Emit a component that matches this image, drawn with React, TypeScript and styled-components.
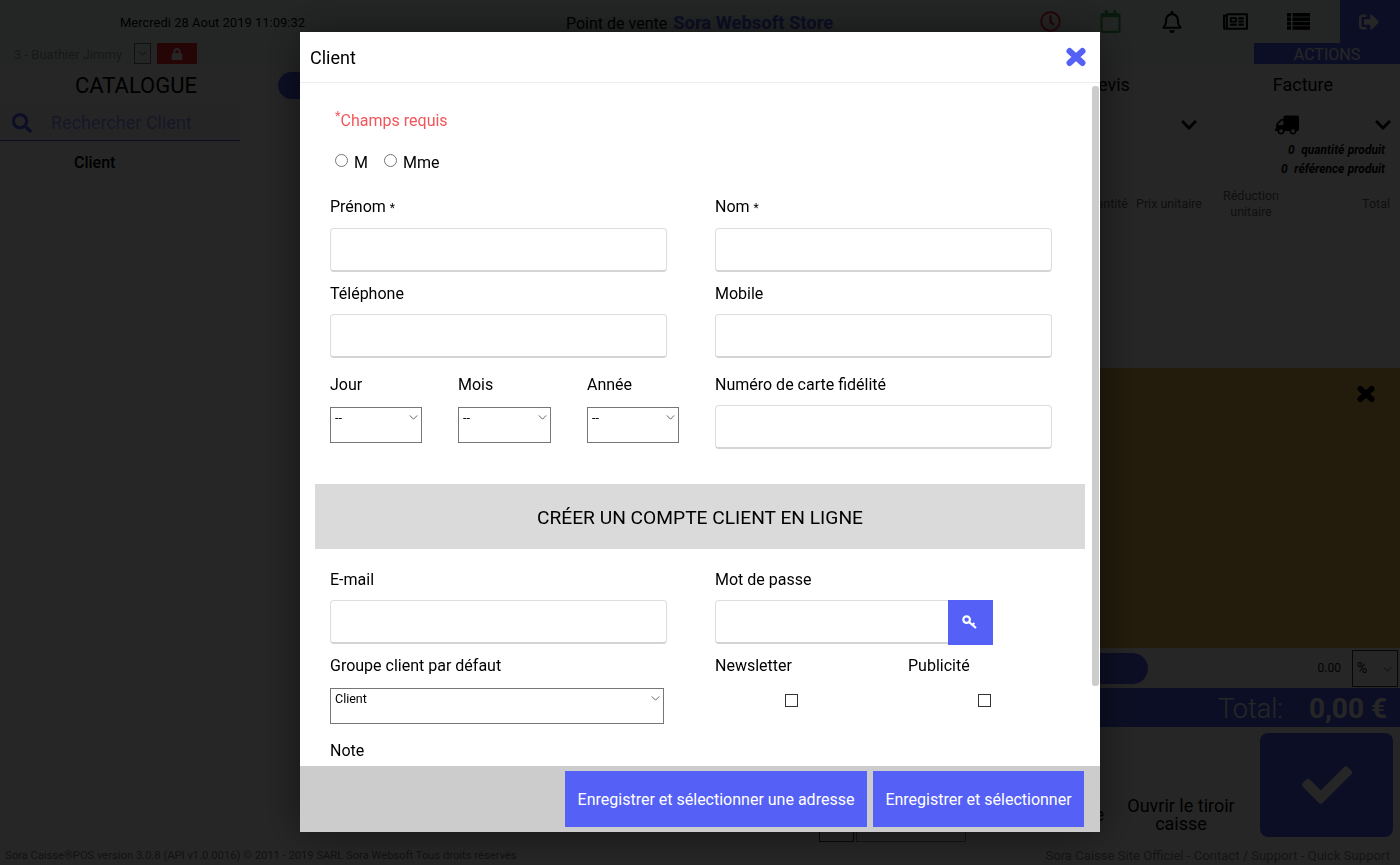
import React from "react";
import styled, { createGlobalStyle } from "styled-components";
import {
  FaCheck,
  FaChevronDown,
  FaLock,
  FaRegBell,
  FaRegCalendar,
  FaRegClock,
  FaRegNewspaper,
  FaSearch,
  FaSignOutAlt,
  FaTruck,
} from "react-icons/fa";

const ACCENT = "#5561f6";

const Global = createGlobalStyle`
  html, body {
    margin: 0;
    height: 100%;
    overflow: hidden;
    font-family: Roboto, "Liberation Sans", sans-serif;
    color: #000;
    background: #fff;
  }
  * { box-sizing: border-box; }
`;

const ChevronSvg = styled.svg`
  position: absolute;
  top: 8px;
  right: 4px;
`;

const Chevron: React.FC = () => (
  <ChevronSvg viewBox="0 0 10 6" width="9" height="5">
    <path d="M0.5 0.5 L5 5 L9.5 0.5" fill="none" stroke="#444" strokeWidth="1" />
  </ChevronSvg>
);

const CloseMark: React.FC<{ size: number }> = ({ size }) => (
  <svg viewBox="0 0 19 18" width={size} height={size}>
    <path d="M3.5 3.5 L15.5 14.5 M15.5 3.5 L3.5 14.5" fill="none" stroke="currentColor" strokeWidth="6" strokeLinecap="round" />
  </svg>
);

const ListMark: React.FC = () => (
  <svg viewBox="0 0 23 17" width="23" height="17" fill="currentColor">
    {[0, 4.4, 8.8, 13.2].map((y) => (
      <g key={y}>
        <rect x="0" y={y} width="4" height="3.6" />
        <rect x="5.5" y={y} width="17.5" height="3.6" />
      </g>
    ))}
  </svg>
);

const KeyMark: React.FC = () => (
  <svg viewBox="0 0 15 14" width="15" height="14" fill="none" stroke="currentColor">
    <circle cx="4.6" cy="4.6" r="3.3" strokeWidth="2.2" />
    <path d="M7 7 L14 13" strokeWidth="2.2" />
    <path d="M10.4 10 L12.4 8" strokeWidth="1.8" />
  </svg>
);

const Select: React.FC<{ value: string; width: number }> = ({ value, width }) => (
  <SelectWrap $width={width}>
    <SelectBox defaultValue={value}>
      <option>{value}</option>
    </SelectBox>
    <Chevron />
  </SelectWrap>
);

export default function App() {
  return (
    <>
      <Global />
      <Page>
        <Header>
          <DateText>Mercredi 28 Aout 2019 11:09:32</DateText>
          <StoreTitle>
            Point de vente <StoreName>Sora Websoft Store</StoreName>
          </StoreTitle>
          <HeaderIcons>
            <HeaderIcon $width={60} $color="#ff2a3a"><FaRegClock size={21} /></HeaderIcon>
            <HeaderIcon $width={60} $color="#3fae5a"><FaRegCalendar size={23} /></HeaderIcon>
            <HeaderIcon $width={63}><FaRegBell size={22} /></HeaderIcon>
            <HeaderIcon $width={64}><FaRegNewspaper size={25} /></HeaderIcon>
            <HeaderIcon $width={63}><ListMark /></HeaderIcon>
            <ExitButton><FaSignOutAlt size={20} /></ExitButton>
          </HeaderIcons>
        </Header>

        <SubBar>
          <UserName>3 - Buathier Jimmy</UserName>
          <SmallSelect><Chevron /></SmallSelect>
          <LockButton><FaLock size={12} /></LockButton>
          <ActionsTag>ACTIONS</ActionsTag>
        </SubBar>

        <TabsRow>
          <TabTitle $width={272}>CATALOGUE</TabTitle>
          <Pill />
          <QuoteTab>Devis</QuoteTab>
          <InvoiceTab>Facture</InvoiceTab>
        </TabsRow>

        <Main>
          <LeftColumn>
            <SearchRow>
              <FaSearch size={20} />
              <SearchText>Rechercher Client</SearchText>
            </SearchRow>
            <ClientHead>Client</ClientHead>
          </LeftColumn>

          <CenterColumn>
            <Pager>
              <PagerCell $width={35} $color="#333" />
              <PagerCell $width={110} $color="#888" />
            </Pager>
          </CenterColumn>

          <RightColumn>
            <ShipRow>
              <ShipChevron $left={100}><FaChevronDown size={18} /></ShipChevron>
              <TruckIcon><FaTruck size={24} /></TruckIcon>
              <ShipChevron $left={75}><FaChevronDown size={18} /></ShipChevron>
            </ShipRow>
            <Counts>
              <div>0 &nbsp;quantité produit</div>
              <div>0 &nbsp;référence produit</div>
            </Counts>
            <TableHead>
              <HeadCell $width={48} $align="right">Quantité</HeadCell>
              <HeadCell $width={82}>Prix unitaire</HeadCell>
              <HeadCell $width={82}>Réduction unitaire</HeadCell>
              <HeadCell $width={98} $align="right">Total</HeadCell>
            </TableHead>
            <Notice>
              <CloseMark size={18} />
            </Notice>
            <DiscountRow>
              <DiscountPill />
              <DiscountValue>0.00</DiscountValue>
              <PercentSelect>
                %
                <Chevron />
              </PercentSelect>
            </DiscountRow>
            <TotalBar>
              <span>Total:</span>
              <TotalValue>0,00 €</TotalValue>
            </TotalBar>
            <ActionRow>
              <ActionLabel>Vide</ActionLabel>
              <DrawerLabel>Ouvrir le tiroir caisse</DrawerLabel>
              <ConfirmButton><FaCheck size={50} /></ConfirmButton>
            </ActionRow>
          </RightColumn>
        </Main>

        <Footer>
          <span>Sora Caisse®POS version 3.0.8 (API v1.0.0016) © 2011 - 2019 SARL Sora Websoft Tous droits réservés</span>
          <FooterLinks>Sora Caisse Site Officiel - Contact / Support - Quick Support</FooterLinks>
        </Footer>
      </Page>

      <Overlay>
        <Modal>
          <ModalHeader>
            <ModalTitle>Client</ModalTitle>
            <CloseIcon><CloseMark size={20} /></CloseIcon>
          </ModalHeader>

          <ModalBody>
            <RequiredNote><sup>*</sup>Champs requis</RequiredNote>
            <RadioRow>
              <RadioLabel><Radio type="radio" name="civ" />M</RadioLabel>
              <RadioLabel><Radio type="radio" name="civ" />Mme</RadioLabel>
            </RadioRow>

            <TwoColumns $top={23} $gap={11}>
              <Field>
                <Label>Prénom <Star>*</Star></Label>
                <TextInput />
              </Field>
              <Field>
                <Label>Nom <Star>*</Star></Label>
                <TextInput />
              </Field>
              <Field>
                <Label>Téléphone</Label>
                <TextInput />
              </Field>
              <Field>
                <Label>Mobile</Label>
                <TextInput />
              </Field>
            </TwoColumns>

            <DateRow>
              <DateFields>
                <div>
                  <Label>Jour</Label>
                  <SelectSlot><Select value="--" width={92} /></SelectSlot>
                </div>
                <div>
                  <Label>Mois</Label>
                  <SelectSlot><Select value="--" width={93} /></SelectSlot>
                </div>
                <div>
                  <Label>Année</Label>
                  <SelectSlot><Select value="--" width={92} /></SelectSlot>
                </div>
              </DateFields>
              <Field>
                <Label>Numéro de carte fidélité</Label>
                <TextInput />
              </Field>
            </DateRow>

            <Banner>CRÉER UN COMPTE CLIENT EN LIGNE</Banner>

            <TwoColumns $top={20} $gap={10}>
              <Field>
                <Label>E-mail</Label>
                <TextInput />
              </Field>
              <Field>
                <Label>Mot de passe</Label>
                <PasswordGroup>
                  <PasswordInput />
                  <KeyButton><KeyMark /></KeyButton>
                </PasswordGroup>
              </Field>
              <Field>
                <Label>Groupe client par défaut</Label>
                <SelectSlot><Select value="Client" width={334} /></SelectSlot>
              </Field>
              <OptIns>
                <div>
                  <Label>Newsletter</Label>
                  <CheckBox type="checkbox" />
                </div>
                <div>
                  <Label>Publicité</Label>
                  <CheckBox type="checkbox" />
                </div>
              </OptIns>
            </TwoColumns>

            <NoteLabel>Note</NoteLabel>
            <ScrollThumb />
          </ModalBody>

          <ModalFooter>
            <SaveButton $width={302}>Enregistrer et sélectionner une adresse</SaveButton>
            <SaveButton $width={211}>Enregistrer et sélectionner</SaveButton>
          </ModalFooter>
        </Modal>
      </Overlay>
    </>
  );
}

/* page behind the dialog */

const Page = styled.div`
  width: 1400px;
  height: 865px;
  display: flex;
  flex-direction: column;
  overflow: hidden;
  background: #fff;
`;

const Header = styled.div`
  height: 43px;
  flex: none;
  display: flex;
  align-items: center;
  background: #f2fffb;
`;

const DateText = styled.div`
  width: 420px;
  padding-left: 120px;
  font-size: 13px;
  padding-top: 2px;
`;

const StoreTitle = styled.div`
  margin-left: 146px;
  font-size: 16px;
  padding-top: 2px;
`;

const StoreName = styled.span`
  margin-left: 2px;
  font-size: 18.4px;
  font-weight: 700;
  color: ${ACCENT};
`;

const HeaderIcons = styled.div`
  margin-left: auto;
  display: flex;
  align-items: center;
  height: 100%;
`;

const HeaderIcon = styled.div<{ $width: number; $color?: string }>`
  width: ${(p) => p.$width}px;
  display: flex;
  justify-content: center;
  color: ${(p) => p.$color || "#000"};
`;

const ExitButton = styled.div`
  width: 60px;
  height: 100%;
  margin-left: 10px;
  padding-right: 2px;
  display: flex;
  align-items: center;
  justify-content: center;
  background: ${ACCENT};
  color: #fff;
`;

const SubBar = styled.div`
  height: 22px;
  flex: none;
  display: flex;
  align-items: flex-start;
  padding-left: 14px;
  background: #f2fffb;
`;

const UserName = styled.div`
  width: 120px;
  font-size: 13px;
  line-height: 24px;
  color: #999;
  white-space: nowrap;
`;

const SmallSelect = styled.div`
  position: relative;
  width: 17px;
  height: 21px;
  border: 1px solid #767676;
  ${ChevronSvg} {
    top: 7px;
    right: 3px;
  }
`;

const LockButton = styled.div`
  width: 40px;
  height: 21px;
  margin-left: 6px;
  display: flex;
  align-items: center;
  justify-content: center;
  background: #ff2434;
  color: #fff;
`;

const ActionsTag = styled.div`
  width: 146px;
  height: 21px;
  margin-left: auto;
  background: ${ACCENT};
  color: #fff;
  font-size: 16px;
  line-height: 24px;
  text-align: center;
`;

const TabsRow = styled.div`
  height: 40px;
  flex: none;
  display: flex;
  align-items: center;
  background: #fbfbfb;
`;

const TabTitle = styled.div<{ $width: number }>`
  width: ${(p) => p.$width}px;
  text-align: center;
  font-size: 22px;
`;

const Pill = styled.div`
  width: 160px;
  height: 27px;
  margin-left: 6px;
  border-radius: 14px;
  background: ${ACCENT};
`;

const QuoteTab = styled.div`
  margin: 0 143px 2px auto;
  font-size: 18px;
`;

const InvoiceTab = styled.div`
  margin: 0 67px 2px 0;
  font-size: 18px;
`;

const Main = styled.div`
  flex: 1;
  min-height: 0;
  display: grid;
  grid-template-columns: 240px 840px 320px;
`;

const LeftColumn = styled.div`
  display: flex;
  flex-direction: column;
`;

const SearchRow = styled.div`
  height: 36px;
  display: flex;
  align-items: center;
  padding-left: 12px;
  border-bottom: 1px solid ${ACCENT};
  background: #f4f9ff;
  color: ${ACCENT};
`;

const SearchText = styled.div`
  margin-left: 19px;
  font-size: 18px;
  opacity: 0.6;
`;

const ClientHead = styled.div`
  padding-left: 74px;
  font-size: 16px;
  font-weight: 500;
  line-height: 43px;
`;

const CenterColumn = styled.div`
  display: flex;
  flex-direction: column;
  justify-content: flex-end;
  padding: 0 0 3px 579px;
`;

const Pager = styled.div`
  display: flex;
  gap: 2px;
`;

const PagerCell = styled.div<{ $width: number; $color: string }>`
  width: ${(p) => p.$width}px;
  height: 10px;
  border: 1px solid ${(p) => p.$color};
  border-top: 0;
`;

const RightColumn = styled.div`
  display: flex;
  flex-direction: column;
`;

const ShipRow = styled.div`
  height: 36px;
  display: flex;
  align-items: center;
  padding-top: 3px;
`;

const ShipChevron = styled.div<{ $left: number }>`
  margin-left: ${(p) => p.$left}px;
  display: flex;
`;

const TruckIcon = styled.div`
  margin-left: 77px;
  display: flex;
  transform: scaleX(-1);
`;

const Counts = styled.div`
  padding-right: 15px;
  text-align: right;
  font-size: 12px;
  font-style: italic;
  font-weight: 700;
  line-height: 19px;
  word-spacing: 0.4px;
`;

const TableHead = styled.div`
  display: flex;
  align-items: center;
  height: 46px;
  margin-top: 2px;
  color: #666;
  font-size: 12.5px;
`;

const HeadCell = styled.div<{ $width: number; $align?: string }>`
  width: ${(p) => p.$width}px;
  text-align: ${(p) => p.$align || "center"};
  line-height: 16px;
`;

const Notice = styled.div`
  height: 280px;
  margin-top: 141px;
  display: flex;
  justify-content: flex-end;
  padding: 17px 25px 0 0;
  background: #e9b551;
`;

const DiscountRow = styled.div`
  height: 40px;
  display: flex;
  align-items: center;
`;

const DiscountPill = styled.div`
  width: 68px;
  height: 31px;
  border-radius: 0 16px 16px 0;
  background: ${ACCENT};
`;

const DiscountValue = styled.div`
  margin-left: auto;
  font-size: 12px;
  color: #111;
`;

const PercentSelect = styled.div`
  position: relative;
  width: 46px;
  height: 37px;
  margin: 0 2px 0 11px;
  padding-left: 4px;
  border: 1px solid #333;
  font-size: 14px;
  line-height: 35px;
  ${ChevronSvg} {
    top: 16px;
    right: 5px;
  }
`;

const TotalBar = styled.div`
  height: 39px;
  display: flex;
  align-items: center;
  justify-content: flex-end;
  padding: 2px 13px 0 0;
  background: ${ACCENT};
  color: #fff;
  font-size: 27px;
  font-weight: 300;
`;

const TotalValue = styled.span`
  margin-left: 26px;
  font-size: 28px;
  font-weight: 700;
`;

const ActionRow = styled.div`
  flex: 1;
  display: flex;
  align-items: flex-start;
  padding-top: 6px;
`;

const ActionLabel = styled.div`
  width: 100px;
  margin: 73px 0 0 -40px;
  padding-right: 36px;
  text-align: right;
  font-size: 18px;
  line-height: 18px;
`;

const DrawerLabel = styled.div`
  width: 110px;
  margin: 64px 0 0 -14px;
  text-align: center;
  font-size: 18px;
  line-height: 18px;
`;

const ConfirmButton = styled.div`
  width: 133px;
  height: 104px;
  margin-left: 24px;
  border-radius: 8px;
  display: flex;
  align-items: center;
  justify-content: center;
  background: ${ACCENT};
  color: #fff;
`;

const Footer = styled.div`
  height: 20px;
  flex: none;
  display: flex;
  align-items: center;
  justify-content: space-between;
  padding: 0 10px 0 5px;
  font-size: 11.2px;
  color: #777;
`;

const FooterLinks = styled.span`
  font-size: 13.1px;
  color: #888;
`;

/* dialog */

const Overlay = styled.div`
  position: fixed;
  inset: 0;
  display: flex;
  justify-content: center;
  align-items: flex-start;
  padding-top: 32px;
  background: rgba(0, 0, 0, 0.85);
`;

const Modal = styled.div`
  width: 800px;
  height: 800px;
  display: flex;
  flex-direction: column;
  background: #fff;
  box-shadow: 0 0 40px rgba(0, 0, 0, 0.5);
`;

const ModalHeader = styled.div`
  height: 51px;
  flex: none;
  display: flex;
  align-items: center;
  justify-content: space-between;
  padding: 0 14px 0 10px;
  border-bottom: 1px solid #eee;
`;

const ModalTitle = styled.div`
  font-size: 18px;
`;

const CloseIcon = styled.div`
  display: flex;
  color: ${ACCENT};
`;

const ModalBody = styled.div`
  position: relative;
  flex: 1;
  min-height: 0;
  overflow: hidden;
  padding: 0 48px 0 30px;
`;

const ScrollThumb = styled.div`
  position: absolute;
  top: 3px;
  right: 1px;
  width: 7px;
  height: 600px;
  border-radius: 3px;
  background: #ccc;
`;

const RequiredNote = styled.div`
  height: 20px;
  margin: 28px 0 0 5px;
  font-size: 16px;
  line-height: 20px;
  color: #f4555a;
  sup {
    font-size: 13px;
    line-height: 0;
  }
`;

const RadioRow = styled.div`
  display: flex;
  gap: 16px;
  margin: 22px 0 0 5px;
  height: 20px;
`;

const RadioLabel = styled.label`
  display: flex;
  align-items: center;
  font-size: 16px;
  line-height: 20px;
`;

const Radio = styled.input`
  width: 13px;
  height: 13px;
  margin: 0 6px 6px 0;
`;

const TwoColumns = styled.div<{ $top: number; $gap: number }>`
  display: grid;
  grid-template-columns: 337px 337px;
  column-gap: 48px;
  row-gap: ${(p) => p.$gap}px;
  margin-top: ${(p) => p.$top}px;
`;

const Field = styled.div`
  min-width: 0;
`;

const Label = styled.div`
  padding-top: 1px;
  margin-bottom: 10px;
  font-size: 16px;
  line-height: 20px;
`;

const Star = styled.span`
  font-size: 12px;
`;

const TextInput = styled.input`
  display: block;
  width: 100%;
  height: 44px;
  padding: 0 10px;
  border: 1px solid #ddd;
  border-bottom: 2px solid #d4d4d4;
  border-radius: 4px;
  background: #fff;
  outline: none;
`;

const DateRow = styled.div`
  display: grid;
  grid-template-columns: 349px 337px;
  column-gap: 36px;
  margin-top: 16px;
`;

const DateFields = styled.div`
  display: grid;
  grid-template-columns: 92px 93px 92px;
  column-gap: 36px;
`;

const SelectSlot = styled.div`
  margin-top: 12px;
`;

const SelectWrap = styled.div<{ $width: number }>`
  position: relative;
  width: ${(p) => p.$width}px;
  height: 36px;
`;

const SelectBox = styled.select`
  display: block;
  width: 100%;
  height: 100%;
  appearance: none;
  padding: 0 0 16px 4px;
  border: 1px solid #767676;
  border-radius: 0;
  background: #fff;
  color: #000;
  font-family: Roboto, sans-serif;
  font-size: 12.5px;
`;

const Banner = styled.div`
  width: 770px;
  height: 65px;
  margin: 35px 0 0 -15px;
  background: #dadada;
  text-align: center;
  font-size: 19.2px;
  line-height: 67px;
`;

const PasswordGroup = styled.div`
  display: flex;
`;

const PasswordInput = styled(TextInput)`
  width: 233px;
  border-right: 0;
  border-radius: 4px 0 0 4px;
`;

const KeyButton = styled.div`
  width: 45px;
  height: 45px;
  padding: 0 3px 1px 0;
  display: flex;
  align-items: center;
  justify-content: center;
  background: ${ACCENT};
  color: #fff;
`;

const OptIns = styled.div`
  display: grid;
  grid-template-columns: 193px 144px;
`;

const CheckBox = styled.input`
  display: block;
  width: 13px;
  height: 13px;
  margin: 18px 0 0 70px;
  appearance: none;
  border: 1px solid #333;
  background: #fff;
`;

const NoteLabel = styled(Label)`
  margin-top: 16px;
`;

const ModalFooter = styled.div`
  height: 66px;
  flex: none;
  display: flex;
  align-items: center;
  justify-content: flex-end;
  gap: 6px;
  padding: 0 16px 0 0;
  background: #ccc;
`;

const SaveButton = styled.button<{ $width: number }>`
  width: ${(p) => p.$width}px;
  height: 56px;
  padding: 0;
  border: 0;
  background: ${ACCENT};
  color: #fff;
  font-family: Roboto, sans-serif;
  font-size: 16px;
`;
